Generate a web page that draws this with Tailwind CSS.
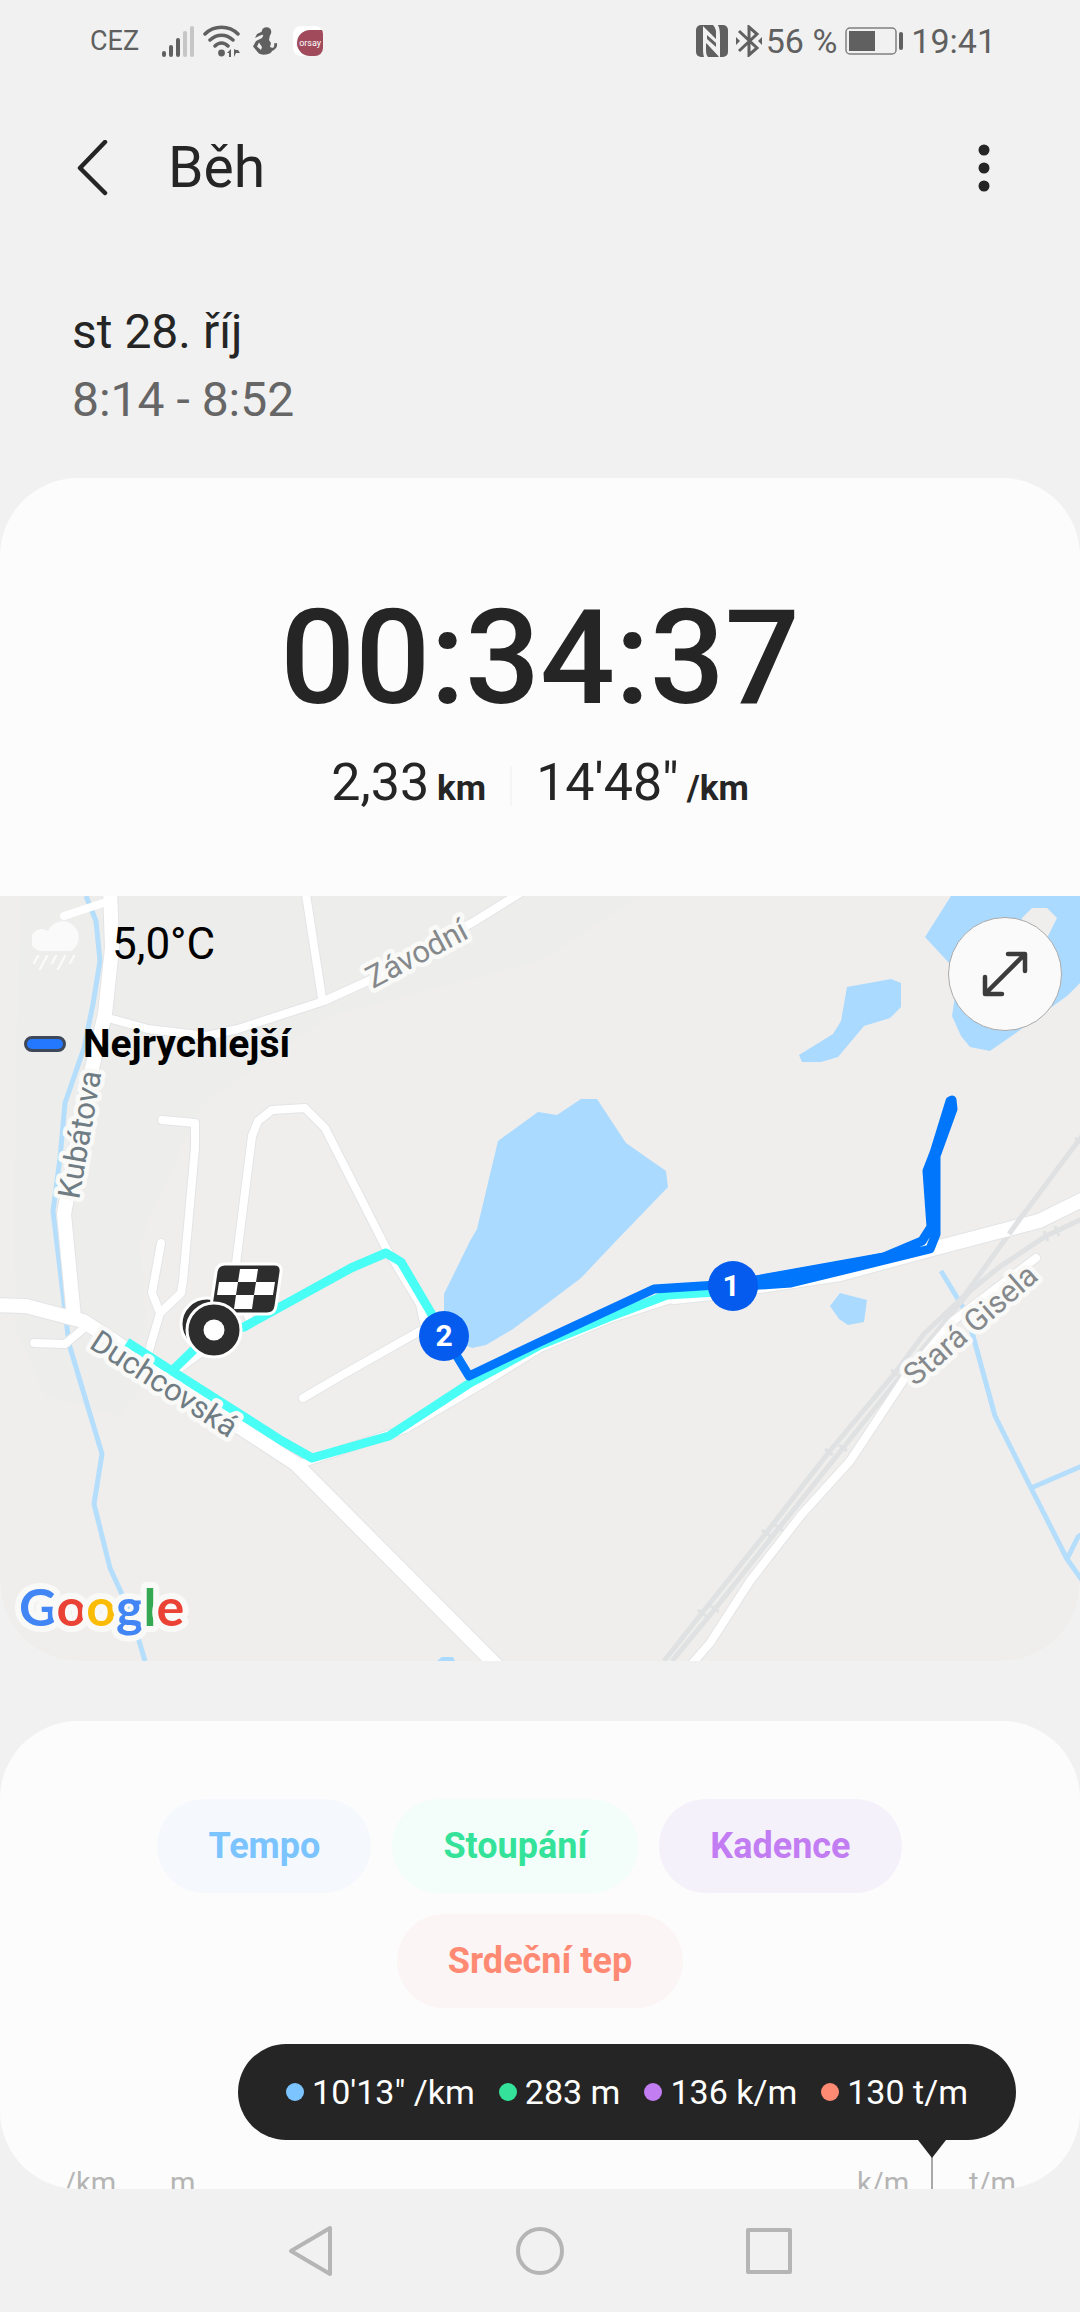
<!DOCTYPE html>
<html lang="cs">
<head>
    <meta charset="UTF-8">
    <meta name="viewport" content="width=device-width, initial-scale=1.0">
    <title>Běh</title>
    <script src="https://cdn.jsdelivr.net/npm/@tailwindcss/browser@4"></script>
</head>
<body class="bg-[#f1f1f1] text-[#252525] font-[Roboto,sans-serif] flex flex-col min-h-screen">

    <!-- Status bar -->
    <div class="flex items-center justify-between h-[82px] pl-[90px] pr-[84px] text-[#606060]">
        <div class="flex items-center">
            <span class="text-[27px] leading-8">CEZ</span>
            <svg class="w-[34px] h-8 ml-[22px]" viewBox="0 0 34 32" stroke-width="4" stroke-linecap="round" aria-hidden="true">
                <path d="M3 28v2M10 22v8M17 15v15" stroke="#606060"/>
                <path d="M24 8v22M31 3v27" stroke="#c6c6c6"/>
            </svg>
            <svg class="w-[38px] h-8 ml-2" viewBox="0 0 38 32" fill="none" stroke="#606060" stroke-width="3.500" stroke-linecap="round" aria-hidden="true">
                <path d="M2 9C11 0 26 0 35 9M7 15C14 8.500 23 8.500 30 15M12 21C16 17 21 17 25 21"/>
                <circle cx="18.500" cy="28" r="3.400" fill="#606060" stroke="none"/>
                <path d="M24 28l4-4v8h-2v-4zM31 24v8l2-4h4l-2-3h-2z" fill="#606060" stroke="none"/>
            </svg>
            <svg class="w-6 h-7 ml-3" viewBox="0 0 24 28" fill="#606060" aria-hidden="true">
                <circle cx="13.500" cy="5" r="4.800"/>
                <path d="M10 4L4 7L2 11L6 9L11 7Z"/>
                <path d="M10 9L17 8L16 13L18 16L17 20C20 22 22 20 21 16.500L24 16C25 20 22 23 19 24C18 28 7 29 5 25.500L0 19.500L3 14L9 11ZM6 15.500L4 19.500L8 23L9 20Z" fill-rule="evenodd"/>
            </svg>
            <span class="flex items-end justify-end w-[30px] h-[30px] ml-4 rounded-lg bg-white overflow-hidden">
                <span class="flex items-center justify-center w-[26px] h-[26px] rounded-l-full rounded-tr-2xl rounded-br-lg bg-[#a04a5c] text-white text-[9px] leading-3">orsay</span>
            </span>
        </div>
        <div class="flex items-center">
            <svg class="w-8 h-8" viewBox="0 0 32 32" aria-hidden="true">
                <rect width="32" height="32" rx="5" fill="#606060"/>
                <path d="M7 1L20 14V10C20 5 19 2 17 0H22C24 4 24 8 24 14V32H23L10 18V23C10 27 10 30 12 32H8C7 29 7 26 7 22Z" fill="#f1f1f1"/>
                <path d="M8 1H17C19 2 20 5 20 10V13ZM11 19L22 31H17C12 30 11 27 11 23ZM11 10L20 18V22L11 14Z" fill="#606060"/>
            </svg>
            <svg class="w-[26px] h-8 ml-2" viewBox="0 0 26 32" fill="none" stroke="#606060" stroke-width="3" aria-hidden="true">
                <path d="M3 6l18 17-8 7V2l8 7L3 26"/>
                <path d="M0 12v8l4-4zM26 12v8l-4-4z" fill="#606060" stroke="none"/>
            </svg>
            <span class="text-[34px] leading-10 ml-1">56 %</span>
            <svg class="w-[58px] h-7 ml-2" viewBox="0 0 58 28" aria-hidden="true">
                <rect x="1" y="1" width="50" height="26" rx="4" fill="none" stroke="#808080" stroke-width="1.500"/>
                <rect x="4" y="4" width="26" height="20" fill="#606060"/>
                <rect x="54" y="5" width="4" height="18" rx="2" fill="#606060"/>
            </svg>
            <span class="text-[34px] leading-10 ml-2">19:41</span>
        </div>
    </div>

    <!-- App bar -->
    <header class="flex items-center h-[172px] pl-16 pr-[84px]">
        <button class="flex items-center justify-center w-14 h-16" aria-label="Zpět">
            <svg class="w-8 h-14" viewBox="0 0 32 56" fill="none" stroke="#252525" stroke-width="4.500" stroke-linecap="round" stroke-linejoin="round">
                <path d="M29 2L4 28l25 25"/>
            </svg>
        </button>
        <h1 class="flex-1 ml-12 text-[57px] leading-[68px]">Běh</h1>
        <button class="flex items-center justify-center w-6 h-16" aria-label="Další možnosti">
            <svg class="w-3 h-12" viewBox="0 0 12 48" fill="#252525">
                <circle cx="6" cy="6" r="5.500"/>
                <circle cx="6" cy="24" r="5.500"/>
                <circle cx="6" cy="42" r="5.500"/>
            </svg>
        </button>
    </header>

    <main class="flex-1">
        <div class="px-[72px] pt-[44px] pb-11 text-[48px] leading-[68px]">
            <p>st 28. říj</p>
            <p class="text-[#666666]">8:14 - 8:52</p>
        </div>

        <!-- Workout summary with the map -->
        <section class="rounded-[78px] bg-[#fcfcfc] overflow-hidden">
            <div class="flex flex-col items-center pt-[101px] pb-[69px]">
                <p class="text-[132px] leading-[158px] font-medium">00:34:37</p>
                <div class="flex items-center gap-6 mt-2 leading-[76px]">
                    <p class="flex items-baseline gap-2 text-[52px]">2,33<span class="text-[35px] font-bold">km</span></p>
                    <span class="w-[2px] h-10 bg-[#f5f5f5]"></span>
                    <p class="flex items-baseline gap-2 text-[52px]">14'48"<span class="text-[35px] font-bold">/km</span></p>
                </div>
            </div>

            <div class="relative bg-[#efeeec]">
                <svg class="block w-full" viewBox="0 0 1080 765" fill="none" role="img" aria-label="Mapa trasy">
                    <path d="M14 300L20 0H640L540 65L330 120L200 210L140 345L150 480L120 520L45 500L15 430Z" fill="#ededec"/>

                    <!-- Water -->
                    <g fill="#aadaff">
                        <path d="M470 345L477 333L498 245L538 216L557 219L581 203H597L626 247L666 275L668 291L616 345L581 382L540 413L513 433L486 449L472 452L444 440V398Z"/>
                        <path d="M847 91L891 83L901 87V111L890 122L864 130L838 161L821 166H802L799 159L833 138L841 125Z"/>
                        <path d="M951 0L925 41L949 67L955 100L952 120L961 140L970 151L990 155L1020 134L1067 100L1080 87V0Z"/>
                        <path d="M840 397L867 404L864 426L848 429L839 423L830 410Z"/>
                        <path d="M437 765L442 761H453L455 765Z"/>
                    </g>
                    <path d="M1022 22L1032 12H1047L1057 22L1048 40L1025 50Z" fill="#efeeec"/>
                    <g stroke="#b5defc" stroke-width="5" stroke-linejoin="round">
                        <path d="M86 0L96 25L100 65L93 108L84 152L65 207L60 262L53 315L69 448L102 558L94 608L110 672L131 718L145 765"/>
                        <path d="M941 375L967 418L995 520L1031 592L1067 663L1082 684M1031 592L1082 570M1067 663L1078 641L1082 638"/>
                    </g>

                    <!-- Railway -->
                    <g stroke="#dfe1e2">
                        <path stroke-width="5" d="M1082 240L1017 327L964 400L924 438L895 477L829 556L766 637L702 717L664 765M1082 323L1046 340L998 372L970 395L929 445L843 552L779 632L715 713L672 765"/>
                        <path stroke-width="3" d="M1075 242L1081 247M1013 324L1021 330M891 474L899 480M825 553L833 559M839 549L847 555M762 634L770 640M775 629L783 635M698 714L706 720M711 710L719 716M1044 335L1048 345M1055 330L1059 340"/>
                    </g>

                    <!-- Roads: a thin grey edge, then the white surface -->
                    <g stroke="#e3e4e6" stroke-linecap="round" stroke-linejoin="round">
                        <path stroke-width="16" d="M110 -8L112 52L105 118L86 198L64 318L74 422M-10 409L26 410L83 425L114 445L172 485L241 532L296 568L500 773"/>
                        <path stroke-width="16" d="M674 401L712 397L840 378L936 352L1039 325L1090 300"/>
                        <path stroke-width="10" d="M108 122L148 133L207 140L238 133L324 105L379 80L475 25L525 -6M305 -8L322 102M162 224L195 227V252L183 385L181 397L160 417L148 458M161 347L152 397L160 417M250 425L236 385V368L252 240L258 225L272 214L305 212L325 232L386 352L420 408L425 430M420 435L344 478L303 502M34 447L65 448L83 433M172 478L207 452M300 568L405 533L482 488L540 452L609 423L674 402M1036 362L953 425L905 482L850 565L802 618L750 685L710 747L690 770"/>
                    </g>
                    <g stroke="#ffffff" stroke-linecap="round" stroke-linejoin="round">
                        <path stroke-width="14" d="M110 -8L112 52L105 118L86 198L64 318L74 422M-10 409L26 410L83 425L114 445L172 485L241 532L296 568L500 773"/>
                        <path stroke-width="14" d="M674 401L712 397L840 378L936 352L1039 325L1090 300"/>
                        <path stroke-width="8" d="M64 20L103 7M108 122L148 133L207 140L238 133L324 105L379 80L475 25L525 -6M305 -8L322 102M162 224L195 227V252L183 385L181 397L160 417L148 458M161 347L152 397L160 417M250 425L236 385V368L252 240L258 225L272 214L305 212L325 232L386 352L420 408L425 430M420 435L344 478L303 502M34 447L65 448L83 433M172 478L207 452M300 568L405 533L482 488L540 452L609 423L674 402M1036 362L953 425L905 482L850 565L802 618L750 685L710 747L690 770"/>
                    </g>
                    <path d="M1025 316L1009 338" stroke="#dfe1e2" stroke-width="5"/>

                    <!-- Recorded route, the fastest part in blue -->
                    <path stroke="#49fff5" stroke-width="9" stroke-linejoin="round" d="M127 446L172 475L282 545L312 562L389 540L470 487L540 449L609 421L667 399L733 395M172 475L213 435L244 431L351 372L386 357L401 366L444 439"/>
                    <g stroke="#0076fd" stroke-width="9" stroke-linejoin="round" stroke-linecap="round">
                        <path d="M444 439L469 480L540 446L654 393L733 388L884 361L922 345L931 331L927 275L934 257L950 205L952 204L953 213L936 260L936 338L930 353L791 387L733 391"/>
                        <path d="M757 384L850 368L905 357M932 268V330"/>
                    </g>

                    <!-- Kilometre marks -->
                    <g font-size="30" font-weight="700" text-anchor="middle">
                        <circle cx="733" cy="390" r="25" fill="#045bee"/>
                        <text x="731" y="400" fill="#ffffff">1</text>
                        <circle cx="444" cy="440" r="25" fill="#045bee"/>
                        <text x="444" y="450" fill="#ffffff">2</text>
                    </g>

                    <!-- Street names -->
                    <g font-size="31" stroke="#f9f9f8" stroke-width="9" stroke-linejoin="round" paint-order="stroke">
                        <text transform="translate(373 93) rotate(-28)" fill="#85898c">Závodní</text>
                        <text transform="translate(79 304) rotate(-80)" fill="#6f7c83">Kubátova</text>
                        <text transform="translate(88 451) rotate(33)" fill="#6f7c83">Duchcovská</text>
                        <text transform="translate(915 491) rotate(-41)" fill="#85898c">Stará Gisela</text>
                    </g>

                    <!-- Start and finish -->
                    <g fill="#2d2d2d" stroke="#ffffff" stroke-width="3">
                        <circle cx="207" cy="428" r="26"/>
                        <path d="M225 368H274Q282 368 281 376L276 410Q275 418 267 418H218Q210 418 211 410L216 376Q217 368 225 368Z"/>
                        <circle cx="214" cy="434" r="27"/>
                    </g>
                    <circle cx="214" cy="434" r="10.500" fill="#ffffff"/>
                    <path d="M240 373H258L256 386H275L273 399H254L252 413H234L236 399H217L219 386H238Z" fill="#ffffff"/>
                    <path d="M238 386H256L254 399H236Z" fill="#2d2d2d"/>

                    <text x="19" y="730" font-size="52" font-family="Lato, sans-serif" font-weight="700" stroke="#f9f9f8" stroke-width="12" stroke-linejoin="round" paint-order="stroke"><tspan fill="#4285f4">G</tspan><tspan fill="#ea4335">o</tspan><tspan fill="#fbbc05">o</tspan><tspan fill="#4285f4">g</tspan><tspan fill="#34a853">l</tspan><tspan fill="#ea4335">e</tspan></text>
                </svg>

                <!-- Weather and legend over the map -->
                <div class="absolute top-5 left-6 text-black">
                    <div class="flex items-center h-14 pl-2">
                        <svg class="w-12 h-[52px]" viewBox="0 0 48 52" aria-hidden="true">
                            <path d="M11 33A11 11 0 1 1 16 13A16 16 0 1 1 39 33Z" fill="#fafafa"/>
                            <path d="M6 38l-4 7M15 38l-7 13M24 38l-4 7M33 38l-7 13M42 38l-4 7" stroke="#fafafa" stroke-width="2.500" stroke-linecap="round"/>
                        </svg>
                        <span class="ml-8 text-[44px] leading-[52px]">5,0°C</span>
                    </div>
                    <div class="flex items-center h-12 mt-12">
                        <span class="w-[42px] h-4 rounded-full border-3 border-[#3f4858] bg-[#2477ff]"></span>
                        <span class="ml-[17px] text-[39px] leading-12 font-bold">Nejrychlejší</span>
                    </div>
                </div>
                <button class="absolute top-[21px] right-[18px] flex items-center justify-center w-[114px] h-[114px] rounded-full border border-[#aaaaaa] bg-[#fafafa]" aria-label="Zvětšit mapu">
                    <svg class="w-12 h-12" viewBox="0 0 48 48" fill="none" stroke="#3c3c3c" stroke-width="4.500" stroke-linecap="round" stroke-linejoin="round">
                        <path d="M5 43L43 5M27 4H44V21M4 27V44H21"/>
                    </svg>
                </button>
            </div>
        </section>

        <!-- Charts -->
        <section class="mt-[60px] pt-[78px] rounded-[78px] bg-[#fcfcfc] overflow-hidden">
            <div class="flex flex-col items-center gap-[21px] text-[36px] leading-[42px] font-bold">
                <div class="flex gap-[21px] pr-[21px]">
                    <button class="h-[94px] px-[51px] rounded-full bg-[#f5f9fd] text-[#7bc4ff]">Tempo</button>
                    <button class="h-[94px] px-[51px] rounded-full bg-[#f3fdf9] text-[#34e399]">Stoupání</button>
                    <button class="h-[94px] px-[51px] rounded-full bg-[#f5f1fb] text-[#c27df3]">Kadence</button>
                </div>
                <button class="h-[94px] px-[51px] rounded-full bg-[#fcf5f5] text-[#ff8a73]">Srdeční tep</button>
            </div>

            <div class="relative flex justify-end mt-9 pr-16">
                <div class="flex items-center gap-6 h-24 px-12 rounded-full bg-[#252525] text-white text-[34px] leading-10">
                    <span class="flex items-center gap-2"><i class="w-[18px] h-[18px] rounded-full bg-[#7bc4ff]"></i>10'13" /km</span>
                    <span class="flex items-center gap-2"><i class="w-[18px] h-[18px] rounded-full bg-[#34e399]"></i>283 m</span>
                    <span class="flex items-center gap-2"><i class="w-[18px] h-[18px] rounded-full bg-[#c27df3]"></i>136 k/m</span>
                    <span class="flex items-center gap-2"><i class="w-[18px] h-[18px] rounded-full bg-[#ff8a73]"></i>130 t/m</span>
                </div>
                <svg class="absolute top-full right-[134px] w-7 h-[50px]" viewBox="0 0 28 50" aria-hidden="true">
                    <path d="M14 16V50" stroke="#a9a9a9" stroke-width="2"/>
                    <path d="M0 0H28L14 18Z" fill="#252525"/>
                </svg>
            </div>

            <!-- Axis units, the chart goes on below the fold -->
            <div class="flex justify-between h-[22px] mt-[27px] px-16 text-[29px] leading-8 text-[#b5b5b5] overflow-hidden">
                <div class="flex gap-[54px]"><span>/km</span><span>m</span></div>
                <div class="flex gap-[60px]"><span>k/m</span><span>t/m</span></div>
            </div>
        </section>
    </main>

    <!-- System navigation -->
    <nav class="flex items-center justify-center gap-[181px] h-[124px]">
        <button class="w-12 h-[52px]" aria-label="Zpět">
            <svg viewBox="0 0 48 52" fill="none" stroke="#b5b5b5" stroke-width="4" stroke-linejoin="round"><path d="M43 3V49L4 26Z"/></svg>
        </button>
        <button class="w-12 h-[52px]" aria-label="Domů">
            <svg viewBox="0 0 48 52" fill="none" stroke="#b5b5b5" stroke-width="4"><circle cx="24" cy="26" r="22"/></svg>
        </button>
        <button class="w-12 h-[52px]" aria-label="Poslední aplikace">
            <svg viewBox="0 0 48 52" fill="none" stroke="#b5b5b5" stroke-width="4" stroke-linejoin="round"><rect x="3" y="5" width="42" height="42"/></svg>
        </button>
    </nav>

</body>
</html>
